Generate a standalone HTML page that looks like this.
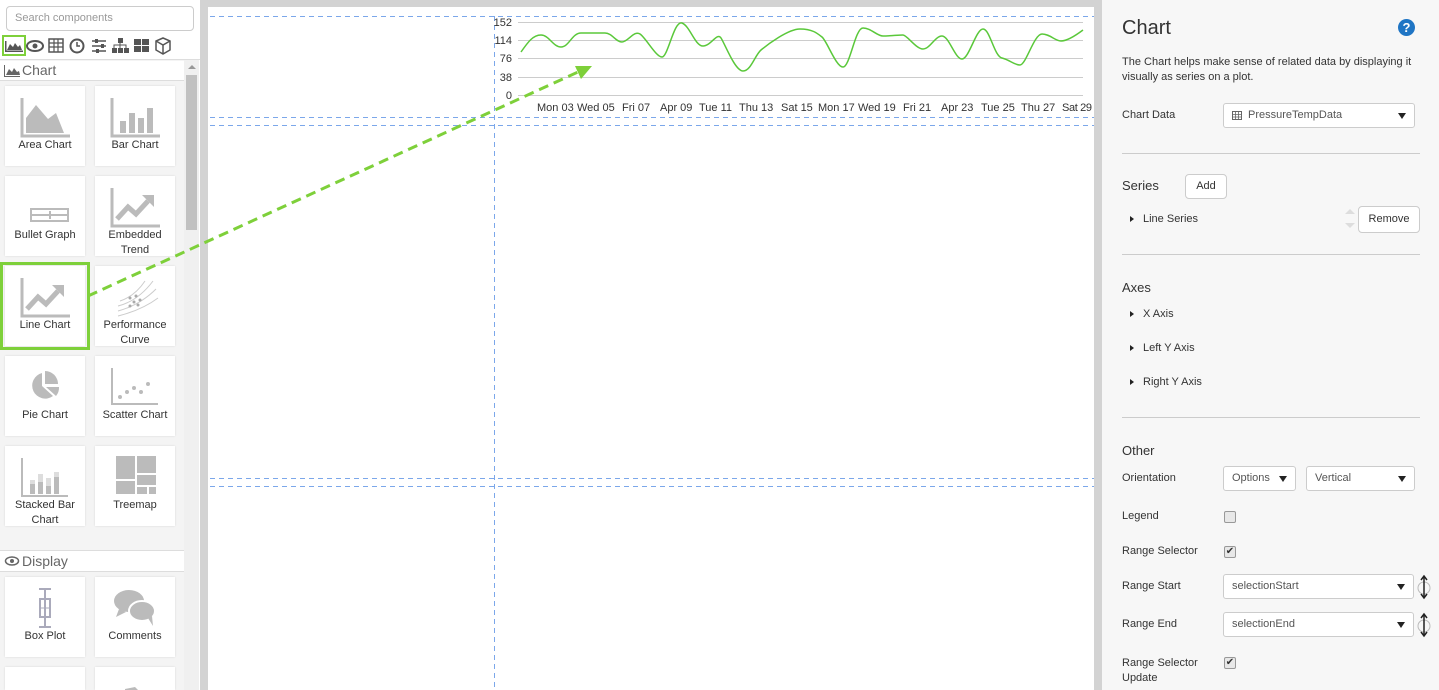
<!DOCTYPE html>
<html style="width:1439px;height:690px;overflow:hidden"><head><meta charset="utf-8"><style>
*{box-sizing:border-box;margin:0;padding:0}
html,body{width:1439px;height:690px;overflow:hidden}
body{position:relative;font-family:"Liberation Sans",sans-serif;background:#fff;color:#333}
.a{position:absolute}
.tile{position:absolute;width:80px;height:80px;background:#fff;box-shadow:0 0 2px rgba(0,0,0,.12);font-size:11px;color:#333;text-align:center}
.tile .l{position:absolute;top:52px;left:0;right:0;line-height:15px}
.tile svg{position:absolute;left:15px;top:10px}
.lbl{position:absolute;font-size:11px;color:#333}
.sel{position:absolute;background:#fff;border:1px solid #ccc;border-radius:3px;height:25px;font-size:11px;color:#555;padding:0 8px;line-height:23px}
.sel:after{content:"";position:absolute;right:8px;top:9px;border-left:4px solid transparent;border-right:4px solid transparent;border-top:6px solid #222}
.hr{position:absolute;left:1122px;width:298px;height:1px;background:#ccc}
.btn{position:absolute;background:#fff;border:1px solid #ccc;border-radius:4px;font-size:11px;text-align:center;color:#333}
.tri{position:absolute;border-top:3.5px solid transparent;border-bottom:3.5px solid transparent;border-left:4px solid #222}
.cb{position:absolute;width:12px;height:12px;border:1px solid #999;border-radius:2px;background:#e8e8e8;font-size:10px;line-height:10px;text-align:center;color:#333}
</style></head><body>
<div class="a" style="left:0;top:0;width:200px;height:690px;background:#fff"></div>
<div class="a" style="left:6px;top:6px;width:188px;height:25px;border:1px solid #ccc;border-radius:4px;font-size:11px;color:#999;padding:0 8px;line-height:23px">Search components</div>
<div class="a" style="left:2px;top:35px;width:24px;height:21px;border:2px solid #7ed03a"></div>
<svg class="a" style="left:0;top:34px" width="180" height="24" viewBox="0 0 180 24" fill="#555">
<path d="M5 7v11h18v-1.5H6.5V7z"/><path d="M7 16l3-6 3 3 2-4 3 4 2-2 2 5z"/>
<ellipse cx="35" cy="12" rx="8" ry="5" fill="none" stroke="#555" stroke-width="2"/><circle cx="35" cy="12" r="2.5"/>
<rect x="49" y="5" width="14" height="13" fill="none" stroke="#555" stroke-width="1.5"/><path d="M49 9h14M49 13h14M54 5v13M58 5v13" stroke="#555" stroke-width="1.2"/>
<circle cx="77" cy="12" r="6.5" fill="none" stroke="#555" stroke-width="2"/><path d="M77 8v4h3" stroke="#555" stroke-width="1.5" fill="none"/>
<path d="M92 7h14M92 12h14M92 17h14" stroke="#555" stroke-width="1.5"/><rect x="95" y="5" width="3" height="4"/><rect x="101" y="10" width="3" height="4"/><rect x="96" y="15" width="3" height="4"/>
<rect x="118" y="4" width="5" height="5"/><rect x="112" y="14" width="5" height="5"/><rect x="118" y="14" width="5" height="5"/><rect x="124" y="14" width="5" height="5"/><path d="M120 9v5M114 14v-3h12v3" stroke="#555" fill="none"/>
<rect x="134" y="5" width="7" height="6"/><rect x="142" y="5" width="7" height="6"/><rect x="134" y="12" width="7" height="6"/><rect x="142" y="12" width="7" height="6"/>
<path d="M163 4l7 3v9l-7 4-7-4V7z" fill="none" stroke="#555" stroke-width="1.5"/><path d="M156 7l7 4 7-4M163 11v9" stroke="#555" stroke-width="1.5" fill="none"/>
</svg>
<div class="a" style="left:0;top:59px;width:200px;height:1px;background:#ddd"></div>
<div class="a" style="left:0;top:60px;width:184px;height:630px;background:#f4f4f4"></div>
<div class="a" style="left:0;top:61px;width:184px;height:20px;background:#fff;border-bottom:1px solid #ddd;font-size:14px;color:#666;padding:1px 0 0 22px">Chart</div>
<svg class="a" style="left:4px;top:64px" width="18" height="14" fill="#666"><path d="M0 1v12h16v-1H1V1z"/><path d="M2 11l3-6 3 3 2-4 3 4 2-1 1 4z"/></svg>
<div class="a" style="left:184px;top:60px;width:15px;height:630px;background:#f0f0f0"></div>
<div class="a" style="left:186px;top:75px;width:11px;height:155px;background:#c1c1c1"></div>
<div class="a" style="left:188px;top:65px;border-left:4px solid transparent;border-right:4px solid transparent;border-bottom:4px solid #999"></div>

<div class="tile" style="left:5px;top:86px"><svg width="50" height="42"><path d="M2 2v38h48" stroke="#bbb" stroke-width="3" fill="none"/><path d="M6 37V22l10-13 12 14 8-6 8 20z" fill="#bbb"/></svg><div class="l">Area Chart</div></div>
<div class="tile" style="left:95px;top:86px"><svg width="50" height="42"><path d="M2 2v38h48" stroke="#bbb" stroke-width="3" fill="none"/><rect x="10" y="25" width="6" height="12" fill="#bbb"/><rect x="19" y="17" width="6" height="20" fill="#bbb"/><rect x="28" y="22" width="6" height="15" fill="#bbb"/><rect x="37" y="12" width="6" height="25" fill="#bbb"/></svg><div class="l">Bar Chart</div></div>
<div class="tile" style="left:5px;top:176px"><svg width="50" height="42"><rect x="11" y="23" width="37" height="12" fill="none" stroke="#bbb" stroke-width="2"/><path d="M11 29h37M30 25v8" stroke="#bbb" stroke-width="2"/></svg><div class="l">Bullet Graph</div></div>
<div class="tile" style="left:95px;top:176px"><svg width="50" height="42"><path d="M2 2v38h48" stroke="#bbb" stroke-width="3" fill="none"/><path d="M7 33l11-12 8 7 12-13" stroke="#bbb" stroke-width="5" fill="none"/><path d="M32 9h12v12z" fill="#bbb"/></svg><div class="l">Embedded<br>Trend</div></div>
<div class="tile" style="left:5px;top:266px"><svg width="50" height="42"><path d="M2 2v38h48" stroke="#bbb" stroke-width="3" fill="none"/><path d="M7 33l11-12 8 7 12-13" stroke="#bbb" stroke-width="5" fill="none"/><path d="M32 9h12v12z" fill="#bbb"/></svg><div class="l">Line Chart</div></div>
<div class="a" style="left:0;top:262px;width:90px;height:88px;border:3px solid #7ed03a"></div>
<div class="tile" style="left:95px;top:266px"><svg width="50" height="42" fill="none" stroke="#ccc" stroke-width="1"><path d="M8 30q20-5 35-25M8 35q22-6 38-22M8 40q24-6 40-18M10 25q15-5 25-20"/><g fill="#aaa" stroke="none"><circle cx="20" cy="22" r="1.5"/><circle cx="26" cy="20" r="1.5"/><circle cx="24" cy="26" r="1.5"/><circle cx="30" cy="24" r="1.5"/><circle cx="20" cy="30" r="1.5"/><circle cx="28" cy="29" r="1.5"/></g></svg><div class="l">Performance<br>Curve</div></div>
<div class="tile" style="left:5px;top:356px"><svg width="50" height="42"><path d="M22 7a13 13 0 1 0 11 23l-11-10z" fill="#bbb"/><path d="M25 5a13 13 0 0 1 13 13h-13z" fill="#bbb"/><path d="M26 21h13a13 13 0 0 1-3 9z" fill="#bbb"/></svg><div class="l">Pie Chart</div></div>
<div class="tile" style="left:95px;top:356px"><svg width="50" height="42"><path d="M2 2v36h46" stroke="#bbb" stroke-width="2" fill="none"/><g fill="#bbb"><circle cx="10" cy="31" r="2"/><circle cx="17" cy="26" r="2"/><circle cx="24" cy="22" r="2"/><circle cx="31" cy="26" r="2"/><circle cx="38" cy="18" r="2"/></g></svg><div class="l">Scatter Chart</div></div>
<div class="tile" style="left:5px;top:446px"><svg width="50" height="42"><path d="M2 2v38h46" stroke="#bbb" stroke-width="2" fill="none"/><g fill="#bbb"><rect x="10" y="28" width="5" height="10"/><rect x="18" y="26" width="5" height="12"/><rect x="26" y="30" width="5" height="8"/><rect x="34" y="21" width="5" height="17"/></g><g fill="#ddd"><rect x="10" y="24" width="5" height="4"/><rect x="18" y="18" width="5" height="8"/><rect x="26" y="22" width="5" height="8"/><rect x="34" y="16" width="5" height="5"/></g></svg><div class="l">Stacked Bar<br>Chart</div></div>
<div class="tile" style="left:95px;top:446px"><svg width="50" height="42"><g fill="#bbb"><rect x="6" y="0" width="19" height="23"/><rect x="27" y="0" width="19" height="17"/><rect x="27" y="19" width="19" height="10"/><rect x="6" y="25" width="19" height="13"/><rect x="27" y="31" width="10" height="7"/><rect x="39" y="31" width="7" height="7"/></g></svg><div class="l">Treemap</div></div>

<div class="a" style="left:0;top:550px;width:184px;height:22px;background:#fff;border-top:1px solid #ddd;border-bottom:1px solid #ddd;font-size:14px;color:#666;padding:2px 0 0 22px">Display</div>
<svg class="a" style="left:4px;top:556px" width="16" height="10"><ellipse cx="8" cy="5" rx="6.5" ry="4" fill="none" stroke="#666" stroke-width="1.5"/><circle cx="8" cy="5" r="2" fill="#666"/></svg>
<div class="tile" style="left:5px;top:577px"><svg width="50" height="42"><path d="M19 2h12M19 40h12M25 2v38" stroke="#aab" stroke-width="2"/><rect x="20" y="12" width="10" height="18" fill="none" stroke="#aab" stroke-width="2"/><path d="M20 21h10" stroke="#aab"/></svg><div class="l">Box Plot</div></div>
<div class="tile" style="left:95px;top:577px"><svg width="50" height="42"><ellipse cx="19" cy="14" rx="15" ry="11" fill="#bbb"/><path d="M9 22l-3 8 10-5z" fill="#bbb"/><ellipse cx="32" cy="24" rx="13" ry="10" fill="#bbb" stroke="#fff" stroke-width="2"/><path d="M38 31l5 8-1-10z" fill="#bbb"/></svg><div class="l">Comments</div></div>
<div class="tile" style="left:5px;top:667px;height:23px"><svg width="50" height="13"><ellipse cx="25" cy="26" rx="18" ry="12" fill="#bbb"/></svg></div>
<div class="tile" style="left:95px;top:667px;height:23px"><svg width="50" height="13"><path d="M15 12l10-2 12 12-10 12-12-12z" fill="#bbb"/></svg></div>

<div class="a" style="left:200px;top:0;width:902px;height:690px;background:#d3d3d3"></div>
<div class="a" style="left:208px;top:7px;width:886px;height:683px;background:#fff"></div>
<svg class="a" style="left:0;top:0" width="1100" height="690">
<g stroke="#7ba7ea" stroke-width="1" stroke-dasharray="5,4" fill="none">
<path d="M210 16.5H1094M210 117.5H1094M210 125.5H1094M210 478.5H1094M210 486.5H1094M494.5 16V690"/>
</g>
<g stroke="#ccc" stroke-width="1"><path d="M518 22.5H1083M518 40.5H1083M518 58.5H1083M518 77.5H1083M518 95.5H1083"/></g>
<g font-size="11" fill="#333" text-anchor="end" font-family="Liberation Sans,sans-serif">
<text x="512" y="26">152</text><text x="512" y="44">114</text><text x="512" y="62">76</text><text x="512" y="81">38</text><text x="512" y="99">0</text></g>
<g font-size="11" fill="#333" font-family="Liberation Sans,sans-serif">
<text x="537" y="111">Mon 03</text><text x="577" y="111">Wed 05</text><text x="622" y="111">Fri 07</text><text x="660" y="111">Apr 09</text><text x="699" y="111">Tue 11</text><text x="739" y="111">Thu 13</text><text x="781" y="111">Sat 15</text><text x="818" y="111">Mon 17</text><text x="858" y="111">Wed 19</text><text x="903" y="111">Fri 21</text><text x="941" y="111">Apr 23</text><text x="981" y="111">Tue 25</text><text x="1021" y="111">Thu 27</text><text x="1062" y="111" textLength="30">Sat 29</text></g>
<path d="M521 52C528 42 533 35 541 35S553 47 561 47S572 33 581 33S598 33 605 33S616 42 622 42S634 30 640 34S656 57 662 57S674 20 682 23S695 46 703 46S717 32 721 38S735 71 743 71S755 55 761 50S788 29 800 29S817 33 822 37S836 67 843 67S855 28 863 28S877 36 883 36S899 35 903 35S916 49 923 49S935 36 942 36S955 59 962 59S976 29 983 29S994 56 1002 58S1014 65 1020 65S1034 34 1042 34S1055 41 1061 41S1075 36 1083 30" fill="none" stroke="#5ac83a" stroke-width="1.5"/>
<path d="M88 296L578 72" stroke="#7ed03a" stroke-width="3" stroke-dasharray="10,6" fill="none"/>
<path d="M592 66L575 66L581 79z" fill="#7ed03a"/>
</svg>

<div class="a" style="left:1102px;top:0;width:337px;height:690px;background:#f7f7f7"></div>
<div class="a" style="left:1122px;top:17px;font-size:20px;color:#333">Chart</div>
<div class="a" style="left:1398px;top:19px;width:17px;height:17px;border-radius:50%;background:#1f75c4;color:#fff;font-size:13px;font-weight:bold;text-align:center;line-height:17px">?</div>
<div class="lbl" style="left:1122px;top:55px;line-height:15px;width:300px">The Chart helps make sense of related data by displaying it visually as series on a plot.</div>
<div class="lbl" style="left:1122px;top:109px">Chart Data</div>
<div class="sel" style="left:1223px;top:103px;width:192px;padding-left:24px">PressureTempData</div>
<svg class="a" style="left:1232px;top:111px" width="10" height="9"><rect x=".5" y=".5" width="9" height="8" fill="none" stroke="#666"/><path d="M0 3.5h10M0 6h10M3.5 0v9M6.5 0v9" stroke="#666" stroke-width=".8"/></svg>
<div class="hr" style="top:153px"></div>
<div class="a" style="left:1122px;top:178px;font-size:13px">Series</div>
<div class="btn" style="left:1185px;top:174px;width:42px;height:25px;line-height:23px">Add</div>
<div class="tri" style="left:1130px;top:216px"></div>
<div class="lbl" style="left:1143px;top:213px">Line Series</div>
<div class="a" style="left:1345px;top:209px;border-left:5px solid transparent;border-right:5px solid transparent;border-bottom:5px solid #ddd"></div>
<div class="a" style="left:1345px;top:223px;border-left:5px solid transparent;border-right:5px solid transparent;border-top:5px solid #ddd"></div>
<div class="btn" style="left:1358px;top:206px;width:62px;height:27px;line-height:25px">Remove</div>
<div class="hr" style="top:254px"></div>
<div class="a" style="left:1122px;top:280px;font-size:13px">Axes</div>
<div class="tri" style="left:1130px;top:311px"></div><div class="lbl" style="left:1143px;top:308px">X Axis</div>
<div class="tri" style="left:1130px;top:345px"></div><div class="lbl" style="left:1143px;top:342px">Left Y Axis</div>
<div class="tri" style="left:1130px;top:379px"></div><div class="lbl" style="left:1143px;top:376px">Right Y Axis</div>
<div class="hr" style="top:417px"></div>
<div class="a" style="left:1122px;top:443px;font-size:13px">Other</div>
<div class="lbl" style="left:1122px;top:472px">Orientation</div>
<div class="sel" style="left:1223px;top:466px;width:73px">Options</div>
<div class="sel" style="left:1306px;top:466px;width:109px">Vertical</div>
<div class="lbl" style="left:1122px;top:510px">Legend</div>
<div class="cb" style="left:1224px;top:511px"></div>
<div class="lbl" style="left:1122px;top:545px">Range Selector</div>
<div class="cb" style="left:1224px;top:546px">✔</div>
<div class="lbl" style="left:1122px;top:580px">Range Start</div>
<div class="sel" style="left:1223px;top:574px;width:191px">selectionStart</div>
<div class="lbl" style="left:1122px;top:618px">Range End</div>
<div class="sel" style="left:1223px;top:612px;width:191px">selectionEnd</div>
<svg class="a" style="left:1416px;top:574px" width="16" height="26"><circle cx="8" cy="14" r="6" fill="none" stroke="#bbb"/><path d="M8 3v20M5 6l3-4 3 4M5 20l3 4 3-4" stroke="#222" stroke-width="1.5" fill="none"/></svg>
<svg class="a" style="left:1416px;top:612px" width="16" height="26"><circle cx="8" cy="14" r="6" fill="none" stroke="#bbb"/><path d="M8 3v20M5 6l3-4 3 4M5 20l3 4 3-4" stroke="#222" stroke-width="1.5" fill="none"/></svg>
<div class="lbl" style="left:1122px;top:656px;line-height:15px">Range Selector<br>Update</div>
<div class="cb" style="left:1224px;top:657px">✔</div>
</body></html>
